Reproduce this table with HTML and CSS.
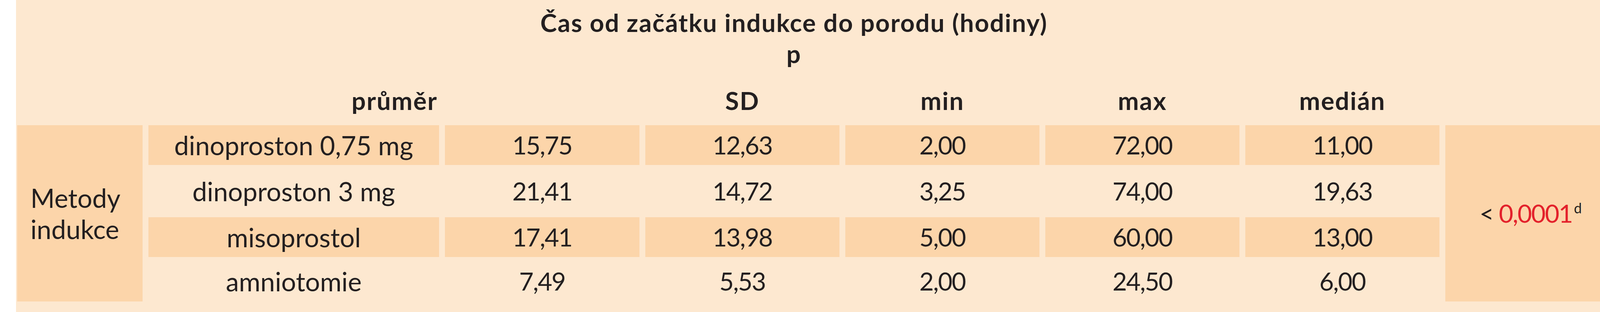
FILE: index.html
```html
<!DOCTYPE html>
<html lang="cs">
<head>
<meta charset="utf-8">
<title>Čas od začátku indukce do porodu</title>
<link rel="stylesheet" href="styles.css">
</head>
<body>
<div class="sheet">
  <div class="grid">
    <div class="cell blank"></div>
    <div class="cell title">Čas od začátku indukce do porodu (hodiny)<br>p</div>
    <div class="cell blank"></div>

    <div class="cell blank"></div>
    <div class="cell head head-right">průměr</div>
    <div class="cell blank"></div>
    <div class="cell head">SD</div>
    <div class="cell head">min</div>
    <div class="cell head">max</div>
    <div class="cell head">medián</div>
    <div class="cell blank"></div>

    <div class="cell data dark method"><span>Metody<br>indukce</span></div>
    <div class="cell data num dark pval"><span>&lt; <span class="red">0,0001</span><sup class="sup">d</sup></span></div>

    <div class="cell data dark">dinoproston 0,75 mg</div>
    <div class="cell data num dark">15,75</div>
    <div class="cell data num dark">12,63</div>
    <div class="cell data num dark">2,00</div>
    <div class="cell data num dark">72,00</div>
    <div class="cell data num dark">11,00</div>

    <div class="cell data">dinoproston 3 mg</div>
    <div class="cell data num">21,41</div>
    <div class="cell data num">14,72</div>
    <div class="cell data num">3,25</div>
    <div class="cell data num">74,00</div>
    <div class="cell data num">19,63</div>

    <div class="cell data dark">misoprostol</div>
    <div class="cell data num dark">17,41</div>
    <div class="cell data num dark">13,98</div>
    <div class="cell data num dark">5,00</div>
    <div class="cell data num dark">60,00</div>
    <div class="cell data num dark">13,00</div>

    <div class="cell data last">amniotomie</div>
    <div class="cell data num last">7,49</div>
    <div class="cell data num last">5,53</div>
    <div class="cell data num last">2,00</div>
    <div class="cell data num last">24,50</div>
    <div class="cell data num last">6,00</div>
  </div>
</div>
</body>
</html>
```

FILE: styles.css
```css
* {
  box-sizing: border-box;
}

html,
body {
  margin: 0;
  padding: 0;
  background: #ffffff;
  overflow: hidden;
}

.sheet {
  margin-left: 41px;
  width: 4099px;
  height: 800px;
  padding: 0 3px 27px;
  background: #fde8d0;
  font-family: Lato, "Liberation Sans", sans-serif;
  color: #231f20;
}

.grid {
  display: grid;
  grid-template-columns: 321px 744px 498px 497px 497px 497px 497px 437px;
  grid-template-rows: 218px 103px 102px 134px 102px 114px;
  column-gap: 15px;
}

.title {
  grid-column: 2 / 8;
  grid-row: 1;
  padding-top: 18px;
  text-align: center;
  font-weight: 700;
  font-size: 64px;
  line-height: 80px;
  letter-spacing: 2px;
}

.head {
  text-align: center;
  font-weight: 700;
  font-size: 64px;
  line-height: 80px;
  letter-spacing: 2px;
}

.head-right {
  text-align: right;
  padding-right: 4px;
}

.data {
  display: flex;
  align-items: center;
  justify-content: center;
  text-align: center;
  font-size: 67px;
  line-height: 80px;
  white-space: nowrap;
}

.num {
  font-size: 64px;
  letter-spacing: -2px;
}

.dark {
  background: #fcd5aa;
}

.method {
  grid-column: 1;
  grid-row: 3 / 7;
  justify-content: flex-start;
  text-align: left;
  padding-left: 34px;
}

.pval {
  grid-column: 8;
  grid-row: 3 / 7;
}

.red {
  color: #e3212b;
}

.sup {
  font-size: 36px;
  line-height: 0;
  letter-spacing: 0;
  vertical-align: 24px;
  margin-left: 4px;
}

.last {
  padding-top: 10px;
}
```
